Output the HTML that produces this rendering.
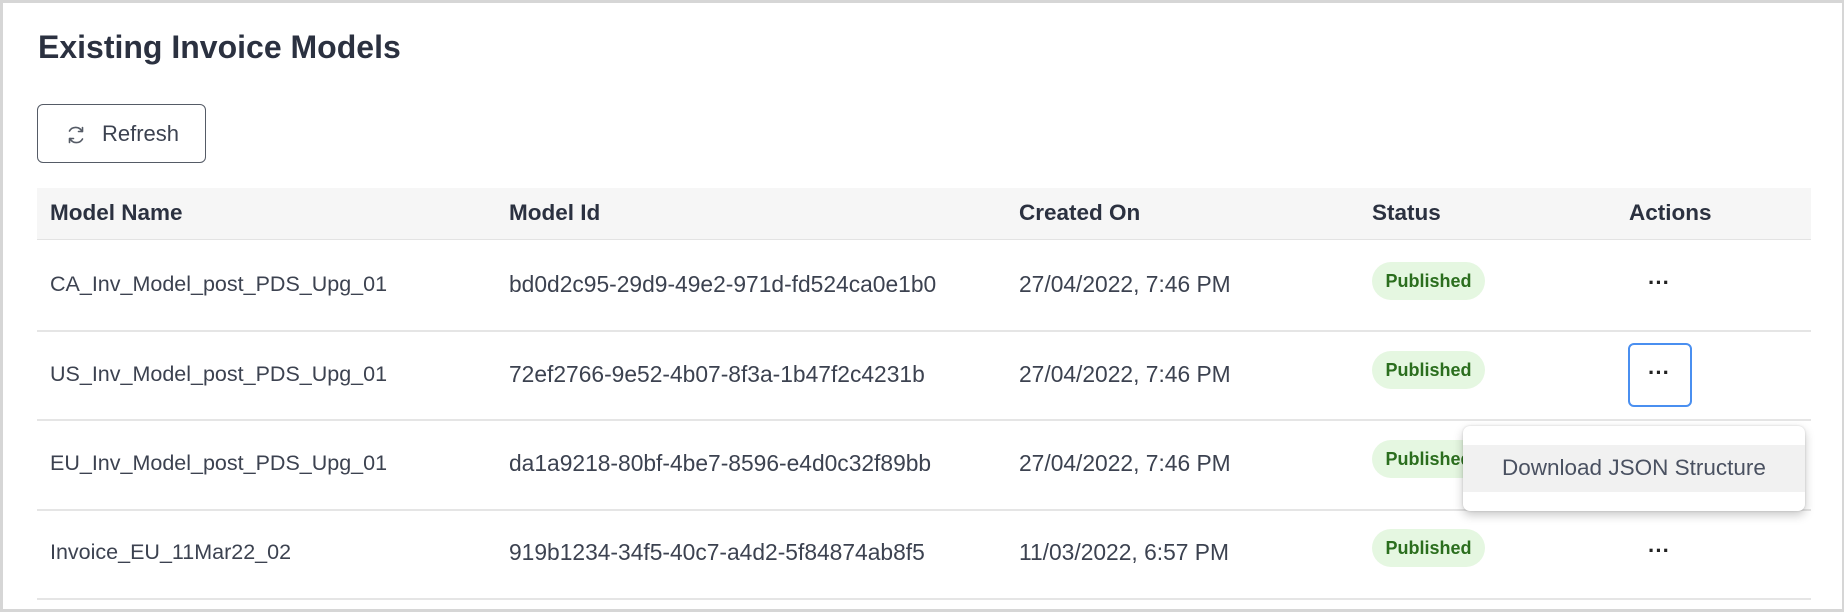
<!DOCTYPE html>
<html><head><meta charset="utf-8">
<style>
*{margin:0;padding:0;box-sizing:border-box}
html,body{width:1844px;height:612px;background:#fff;overflow:hidden}
body{font-family:"Liberation Sans",sans-serif;color:#3c4250;position:relative}
.frame{position:absolute;left:0;top:0;width:1844px;height:612px;border:3px solid #d6d6d6;border-right-width:2px}
.title{position:absolute;left:38px;top:29px;font-size:32px;font-weight:bold;color:#2b3140;white-space:nowrap}
.btn{position:absolute;left:37px;top:104px;width:169px;height:59px;border:1.5px solid #555b66;border-radius:6px}
.btn span{position:absolute;left:64px;top:16px;font-size:22px;color:#3c4250}
.btn svg{position:absolute;left:27px;top:20px}
.hdr{position:absolute;left:37px;top:188px;width:1774px;height:52px;background:#f6f6f6;border-bottom:1.5px solid #e3e3e3}
.h{position:absolute;top:200px;font-size:22.5px;font-weight:bold;color:#2b3140;white-space:nowrap}
.line{position:absolute;left:37px;width:1774px;height:1.5px;background:#e5e5e5}
.c{position:absolute;font-size:21.5px;color:#3c4250;white-space:nowrap}
.c.w{font-size:22.8px}
.badge{position:absolute;left:1372px;width:113px;height:38px;border-radius:19px;background:#e5f7e1;color:#2b6e1e;font-size:18px;font-weight:bold;line-height:38px;text-align:center}
.dots{position:absolute;left:1648px;font-size:22px;color:#222;font-weight:bold}
.focus{position:absolute;left:1628px;top:343px;width:64px;height:64px;border:2.5px solid #4a8ff0;border-radius:6px}
.menu{position:absolute;left:1463px;top:426px;width:342px;height:85px;background:#fff;border-radius:7px;box-shadow:0 4px 10px rgba(0,0,0,.22),0 0 2px rgba(0,0,0,.15);z-index:5}
.menu .item{position:absolute;left:0;top:19px;width:342px;height:47px;background:#f1f1f1}
.menu .item span{position:absolute;left:39px;top:10px;font-size:22.5px;color:#4a5161;white-space:nowrap}
</style></head><body>
<div class="frame"></div>
<div class="title">Existing Invoice Models</div>
<div class="btn">
<svg width="22" height="20" viewBox="0 0 22 20" fill="none" stroke="#555b66" stroke-width="1.6" stroke-linecap="round" stroke-linejoin="round">
<path d="M17 6.5A7 7 0 0 0 4.5 6"/><path d="M17.5 2.5v4h-4"/>
<path d="M5 13.5A7 7 0 0 0 17.5 14"/><path d="M4.5 17.5v-4h4"/>
</svg>
<span>Refresh</span></div>

<div class="hdr"></div>
<div class="h" style="left:50px">Model Name</div>
<div class="h" style="left:509px">Model Id</div>
<div class="h" style="left:1019px">Created On</div>
<div class="h" style="left:1372px">Status</div>
<div class="h" style="left:1629px">Actions</div>

<div class="line" style="top:330px"></div>
<div class="line" style="top:419px"></div>
<div class="line" style="top:509px"></div>
<div class="line" style="top:598px"></div>

<div class="c" style="left:50px;top:272px">CA_Inv_Model_post_PDS_Upg_01</div>
<div class="c w" style="left:509px;top:271px">bd0d2c95-29d9-49e2-971d-fd524ca0e1b0</div>
<div class="c w" style="left:1019px;top:271px">27/04/2022, 7:46 PM</div>
<div class="badge" style="top:262px">Published</div>
<div class="dots" style="top:270px">···</div>

<div class="c" style="left:50px;top:362px">US_Inv_Model_post_PDS_Upg_01</div>
<div class="c w" style="left:509px;top:361px">72ef2766-9e52-4b07-8f3a-1b47f2c4231b</div>
<div class="c w" style="left:1019px;top:361px">27/04/2022, 7:46 PM</div>
<div class="badge" style="top:351px">Published</div>
<div class="focus"></div>
<div class="dots" style="top:360px">···</div>

<div class="c" style="left:50px;top:451px">EU_Inv_Model_post_PDS_Upg_01</div>
<div class="c w" style="left:509px;top:450px">da1a9218-80bf-4be7-8596-e4d0c32f89bb</div>
<div class="c w" style="left:1019px;top:450px">27/04/2022, 7:46 PM</div>
<div class="badge" style="top:440px">Published</div>

<div class="c" style="left:50px;top:540px">Invoice_EU_11Mar22_02</div>
<div class="c w" style="left:509px;top:539px">919b1234-34f5-40c7-a4d2-5f84874ab8f5</div>
<div class="c w" style="left:1019px;top:539px">11/03/2022, 6:57 PM</div>
<div class="badge" style="top:529px">Published</div>
<div class="dots" style="top:538px">···</div>

<div class="menu"><div class="item"><span>Download JSON Structure</span></div></div>
</body></html>
